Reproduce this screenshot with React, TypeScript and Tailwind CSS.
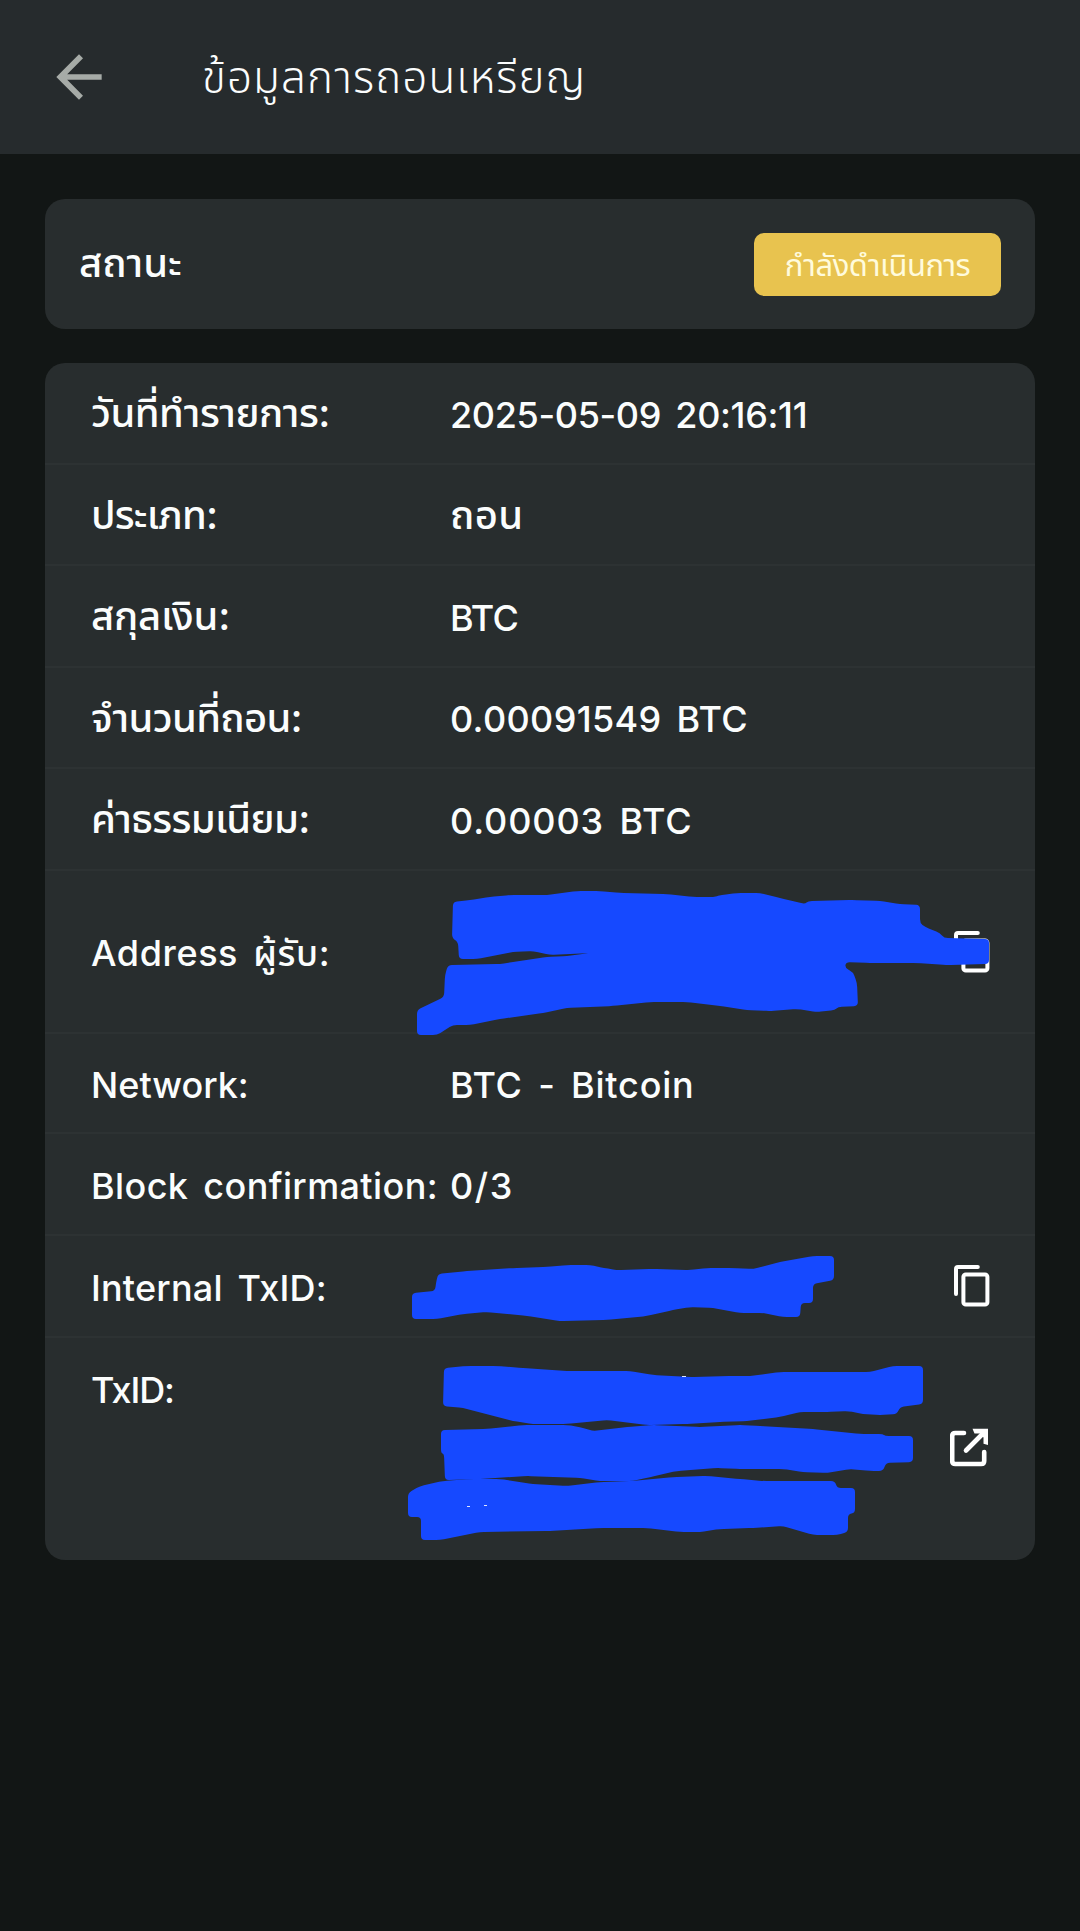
import React from "react";

interface DetailRow {
  label: string;
  labelClass: string;
  value?: string;
  valueClass?: string;
  icon?: "copy" | "external";
  height: string;
}

const rows: DetailRow[] = [
  {
    label: "วันที่ทำรายการ:",
    labelClass: "text-[40px] tracking-[-0.5px]",
    value: "2025-05-09 20:16:11",
    valueClass: "text-[36px] tracking-[-0.35px] pt-[3px]",
    height: "h-[102px]",
  },
  {
    label: "ประเภท:",
    labelClass: "text-[40px] tracking-[-0.8px]",
    value: "ถอน",
    valueClass: "text-[40px] tracking-[0.3px]",
    height: "h-[101px]",
  },
  {
    label: "สกุลเงิน:",
    labelClass: "text-[40px] tracking-[-0.2px]",
    value: "BTC",
    valueClass: "text-[36px] tracking-[-0.8px] pt-[3px]",
    height: "h-[102px]",
  },
  {
    label: "จำนวนที่ถอน:",
    labelClass: "text-[40px] tracking-[-0.7px]",
    value: "0.00091549 BTC",
    valueClass: "text-[36px] tracking-[0.35px] pt-[3px]",
    height: "h-[101px]",
  },
  {
    label: "ค่าธรรมเนียม:",
    labelClass: "text-[40px] tracking-[-0.7px]",
    value: "0.00003 BTC",
    valueClass: "text-[36px] tracking-[0.9px] pt-[3px]",
    height: "h-[102px]",
  },
  {
    label: "Address ผู้รับ:",
    labelClass: "text-[36px] tracking-[0.6px] pt-[2px]",
    icon: "copy",
    height: "h-[163px]",
  },
  {
    label: "Network:",
    labelClass: "text-[36px] pt-[4px]",
    value: "BTC - Bitcoin",
    valueClass: "text-[36px] tracking-[0.8px] pt-[4px]",
    height: "h-[100px]",
  },
  {
    label: "Block confirmation:",
    labelClass: "text-[36px] tracking-[0.4px] pt-[4px]",
    value: "0/3",
    valueClass: "text-[36px] tracking-[1.600px] pt-[4px]",
    height: "h-[102px]",
  },
  {
    label: "Internal TxID:",
    labelClass: "text-[36px] tracking-[0.2px] pt-[4px]",
    icon: "copy",
    height: "h-[102px]",
  },
  {
    label: "TxID:",
    labelClass: "text-[36px] tracking-[-1.1px] self-start mt-[25px]",
    icon: "external",
    height: "h-[222px]",
  },
];

// marker strokes over the private values, in page coordinates
const strokes = [
  "453,902 470,900 490,897 510,895 547,895 577,891 600,891 620,893 667,894 693,897 713,897 722,895 737,893 760,893 780,898 805,904 808,901 853,900 880,901 900,904 920,905 920,923 925,927 940,933 944,938 989,939 989,964 947,965 917,963 870,963 846,962 845,968 853,972 857,983 858,1006 838,1007 835,1010 817,1012 797,1009 770,1011 747,1010 720,1006 687,1002 650,1002 613,1006 567,1008 543,1013 500,1019 470,1025 453,1025 437,1035 417,1035 417,1010 444,997 445,975 448,965 500,964 547,957 567,956 590,953 550,955 533,951 513,952 477,959 459,959 458,942 452,938",
  "412,1293 435,1291 436,1283 438,1274 467,1271 513,1268 547,1267 567,1265 590,1265 604,1268 617,1270 653,1269 690,1270 707,1268 733,1268 753,1269 780,1262 813,1256 834,1256 834,1280 813,1284 813,1303 801,1303 800,1317 783,1317 763,1313 740,1313 713,1308 690,1307 673,1310 647,1316 607,1320 560,1321 527,1316 487,1312 463,1314 437,1319 412,1319",
  "444,1368 467,1366 497,1366 523,1368 567,1371 600,1371 630,1371 653,1375 690,1377 733,1376 750,1376 780,1372 820,1372 870,1372 893,1366 923,1366 923,1404 900,1407 897,1414 880,1415 863,1414 848,1411 827,1412 800,1412 780,1417 747,1421 720,1422 687,1424 647,1425 607,1420 567,1424 533,1424 513,1421 463,1408 443,1406",
  "441,1430 487,1429 523,1425 567,1425 580,1427 593,1431 627,1427 653,1425 700,1427 740,1425 760,1426 813,1429 860,1434 883,1434 885,1436 913,1436 913,1462 886,1463 883,1471 870,1471 850,1469 827,1473 803,1472 783,1469 740,1469 717,1468 677,1471 650,1477 633,1481 600,1481 580,1478 527,1476 480,1479 445,1480 444,1454 441,1453",
  "408,1493 420,1486 443,1481 470,1479 500,1479 533,1484 567,1486 600,1482 633,1481 673,1477 707,1476 740,1479 763,1481 835,1481 837,1488 855,1488 855,1513 848,1514 848,1532 837,1535 813,1535 783,1526 753,1528 720,1529 700,1532 680,1532 647,1528 600,1528 550,1531 480,1532 440,1540 421,1540 421,1517 408,1517",
];

// closed path through the points, with each corner rounded off
function roundedPath(points: string, radius = 4) {
  const pts = points.split(" ").map((p) => p.split(",").map(Number));
  const toward = (a: number[], b: number[]) => {
    const len = Math.hypot(b[0] - a[0], b[1] - a[1]);
    const t = Math.min(radius, len / 2) / len;
    return `${a[0] + (b[0] - a[0]) * t} ${a[1] + (b[1] - a[1]) * t}`;
  };
  return (
    pts
      .map((p, i) => {
        const prev = pts[(i + pts.length - 1) % pts.length];
        const next = pts[(i + 1) % pts.length];
        return `${i ? "L" : "M"}${toward(p, prev)}Q${p[0]} ${p[1]} ${toward(p, next)}`;
      })
      .join("") + "Z"
  );
}

const BackIcon = () => (
  <svg className="h-[68px] w-[68px]" viewBox="0 0 24 24" fill="#a6aba7">
    <path d="M20 11H7.83l5.59-5.59L12 4l-8 8 8 8 1.41-1.41L7.83 13H20v-2z" />
  </svg>
);

const CopyIcon = () => (
  <svg
    className="h-[44px] w-[38px]"
    viewBox="0 0 38 44"
    fill="none"
    stroke="#fff"
    strokeWidth="4"
    strokeLinecap="round"
    strokeLinejoin="round"
  >
    <path d="M4 30V5q0-2 2-2H25.800" />
    <rect x="11.4" y="10.4" width="24" height="30.2" rx="2.4" />
  </svg>
);

const ExternalIcon = () => (
  <svg
    className="h-[42px] w-[40px]"
    viewBox="0 0 40 42"
    fill="none"
    stroke="#fff"
    strokeWidth="4.6"
    strokeLinecap="round"
    strokeLinejoin="round"
  >
    <path d="M14 5H5.200q-3 0-3 3v25q0 3 3 3h26q3 0 3-3V24" />
    <path d="M16 22.500L33 5.500" />
    <path d="M22.500 0.800H38V17l-4.500-1.300V9.500l-3.700-3.900h-5.300z" fill="#fff" stroke="none" />
  </svg>
);

export default function App() {
  return (
    <div className="relative h-[1931px] w-[1080px] overflow-hidden bg-[#121615] font-['Inter','Noto_Sans_Thai',sans-serif] text-[#fbfdfd]">
      <header className="flex h-[154px] items-center bg-[#262b2d] pl-[45px]">
        <BackIcon />
        <h1 className="ml-[89px] text-[44px] font-light tracking-[1.1px] whitespace-nowrap">
          ข้อมูลการถอนเหรียญ
        </h1>
      </header>

      <main className="px-[45px] pt-[45px]">
        {/* status */}
        <section className="flex h-[130px] items-center justify-between rounded-[20px] bg-[#282d2e] pr-[34px] pl-[34px]">
          <span className="pb-[2px] text-[40px] font-medium">สถานะ</span>
          <span className="flex h-[63px] w-[247px] items-center justify-center rounded-[10px] bg-[#e8c34f] pt-[2px] text-[31px] tracking-[-0.5px] whitespace-nowrap text-[#fffbdc]">
            กำลังดำเนินการ
          </span>
        </section>

        {/* details */}
        <section className="mt-[34px] overflow-hidden rounded-[20px] bg-[#282d2e]">
          {rows.map((row) => (
            <div
              key={row.label}
              className={`flex items-center border-b-2 border-[#2d3233] pr-[45px] pl-[46px] last:border-b-0 ${row.height}`}
            >
              <span
                className={`w-[359px] shrink-0 font-medium whitespace-nowrap [word-spacing:5px] ${row.labelClass}`}
              >
                {row.label}
              </span>
              {row.value && (
                <span
                  className={`font-medium whitespace-nowrap [word-spacing:5px] ${row.valueClass}`}
                >
                  {row.value}
                </span>
              )}
              {row.icon && (
                <span className="ml-auto">
                  {row.icon === "copy" ? <CopyIcon /> : <ExternalIcon />}
                </span>
              )}
            </div>
          ))}
        </section>
      </main>

      <svg
        className="pointer-events-none absolute inset-0"
        width="1080"
        height="1931"
        viewBox="0 0 1080 1931"
        fill="#1649ff"
      >
        {strokes.map((points, i) => (
          <path key={i} d={roundedPath(points)} />
        ))}
        {/* slivers of text left uncovered */}
        <path
          d="M682 1376.500h4M467 1506.500h3M484 1505.500h3"
          stroke="#dfe6ff"
          strokeWidth="1"
        />
      </svg>
    </div>
  );
}
